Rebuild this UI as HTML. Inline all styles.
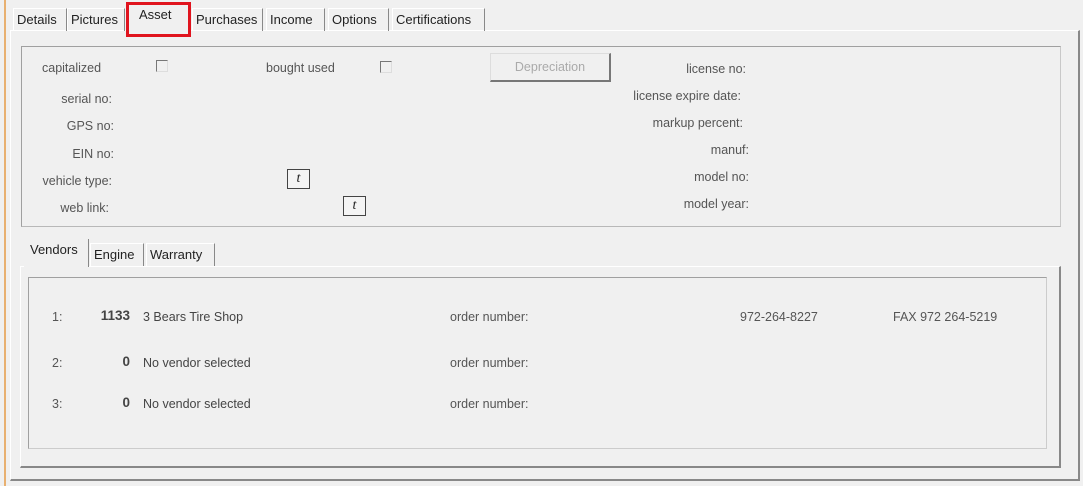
<!DOCTYPE html>
<html><head><style>
body{margin:0;width:1083px;height:486px;background:#f0f0f0;position:relative;overflow:hidden;font-family:"Liberation Sans",sans-serif;font-size:12.5px;color:#222}
div,span{position:absolute;box-sizing:border-box}
.tab{top:8px;height:23px;padding:3px 3px 0;border-right:1px solid #888;border-left:1px solid #fff;border-top:1px solid #fff;white-space:nowrap;font-size:13px}
.l{color:#555;white-space:nowrap}
.r{text-align:right}
.cb{width:12px;height:12px;border:1px solid #777;border-right-color:#ddd;border-bottom-color:#ddd;background:#f0f0f0}
.tb{width:23px;height:20px;border:1px solid #444;background:#f4f4f4;font-family:"Liberation Serif",serif;font-style:italic;text-align:center;line-height:17px;font-size:14px}
</style></head><body>
<div style="left:4px;top:0;width:2px;height:486px;background:#e8b070"></div>
<div style="left:10px;top:30px;width:1070px;height:451px;border-top:1px solid #fff;border-left:1px solid #fff;border-right:2px solid #888;border-bottom:2px solid #888"></div>
<div class="tab" style="left:13px;width:54px">Details</div>
<div class="tab" style="left:67px;width:58px">Pictures</div>
<div class="tab" style="left:128px;width:62px;top:4px;height:28px;background:#f0f0f0;border:none;padding-left:11px">Asset</div>
<div style="left:126px;top:2px;width:65px;height:35px;border:3px solid #e0141e"></div>
<div class="tab" style="left:192px;width:71px">Purchases</div>
<div class="tab" style="left:266px;width:59px">Income</div>
<div class="tab" style="left:328px;width:61px">Options</div>
<div class="tab" style="left:392px;width:93px">Certifications</div>
<div style="left:21px;top:46px;width:1040px;height:181px;border:1px solid #a0a0a0;border-right-color:#c8c8c8;border-bottom-color:#b8b8b8"></div>
<span class="l" style="left:42px;top:61px">capitalized</span>
<div class="cb" style="left:156px;top:60px"></div>
<span class="l" style="left:266px;top:61px">bought used</span>
<div class="cb" style="left:380px;top:61px"></div>
<div style="left:490px;top:53px;width:121px;height:29px;border:1px solid #ddd;border-right:2px solid #777;border-bottom:2px solid #777;color:#aaa;text-align:center;line-height:26px">Depreciation</div>
<span class="l r" style="left:600px;width:146px;top:62px">license no:</span>
<span class="l r" style="left:600px;width:141px;top:89px">license expire date:</span>
<span class="l r" style="left:600px;width:143px;top:116px">markup percent:</span>
<span class="l r" style="left:600px;width:149px;top:143px">manuf:</span>
<span class="l r" style="left:600px;width:149px;top:170px">model no:</span>
<span class="l r" style="left:600px;width:149px;top:197px">model year:</span>
<span class="l r" style="left:20px;width:92px;top:92px">serial no:</span>
<span class="l r" style="left:20px;width:94px;top:119px">GPS no:</span>
<span class="l r" style="left:20px;width:94px;top:147px">EIN no:</span>
<span class="l r" style="left:20px;width:92px;top:174px">vehicle type:</span>
<span class="l r" style="left:20px;width:89px;top:201px">web link:</span>
<div class="tb" style="left:287px;top:169px">t</div>
<div class="tb" style="left:343px;top:196px">t</div>
<div style="left:20px;top:266px;width:1041px;height:202px;border-top:1px solid #fff;border-left:1px solid #fff;border-right:2px solid #888;border-bottom:2px solid #888"></div>
<div class="tab" style="left:24px;top:239px;width:65px;height:28px;border:none;border-right:1px solid #888;background:#f0f0f0;padding-left:6px">Vendors</div>
<div class="tab" style="left:90px;top:243px;width:54px">Engine</div>
<div class="tab" style="left:146px;top:243px;width:69px">Warranty</div>
<div style="left:28px;top:277px;width:1019px;height:172px;border:1px solid #a0a0a0;border-right-color:#ccc;border-bottom-color:#ccc"></div>
<span class="l" style="left:52px;top:310px">1:</span>
<span class="r" style="left:80px;width:50px;top:308px;font-weight:bold;color:#444;font-size:13.5px">1133</span>
<span style="left:143px;top:310px;color:#444">3 Bears Tire Shop</span>
<span class="l" style="left:450px;top:310px">order number:</span>
<span class="l" style="left:740px;top:310px">972-264-8227</span>
<span class="l" style="left:893px;top:310px">FAX 972 264-5219</span>
<span class="l" style="left:52px;top:356px">2:</span>
<span class="r" style="left:80px;width:50px;top:354px;font-weight:bold;color:#444;font-size:13.5px">0</span>
<span style="left:143px;top:356px;color:#444">No vendor selected</span>
<span class="l" style="left:450px;top:356px">order number:</span>
<span class="l" style="left:52px;top:397px">3:</span>
<span class="r" style="left:80px;width:50px;top:395px;font-weight:bold;color:#444;font-size:13.5px">0</span>
<span style="left:143px;top:397px;color:#444">No vendor selected</span>
<span class="l" style="left:450px;top:397px">order number:</span>
</body></html>
